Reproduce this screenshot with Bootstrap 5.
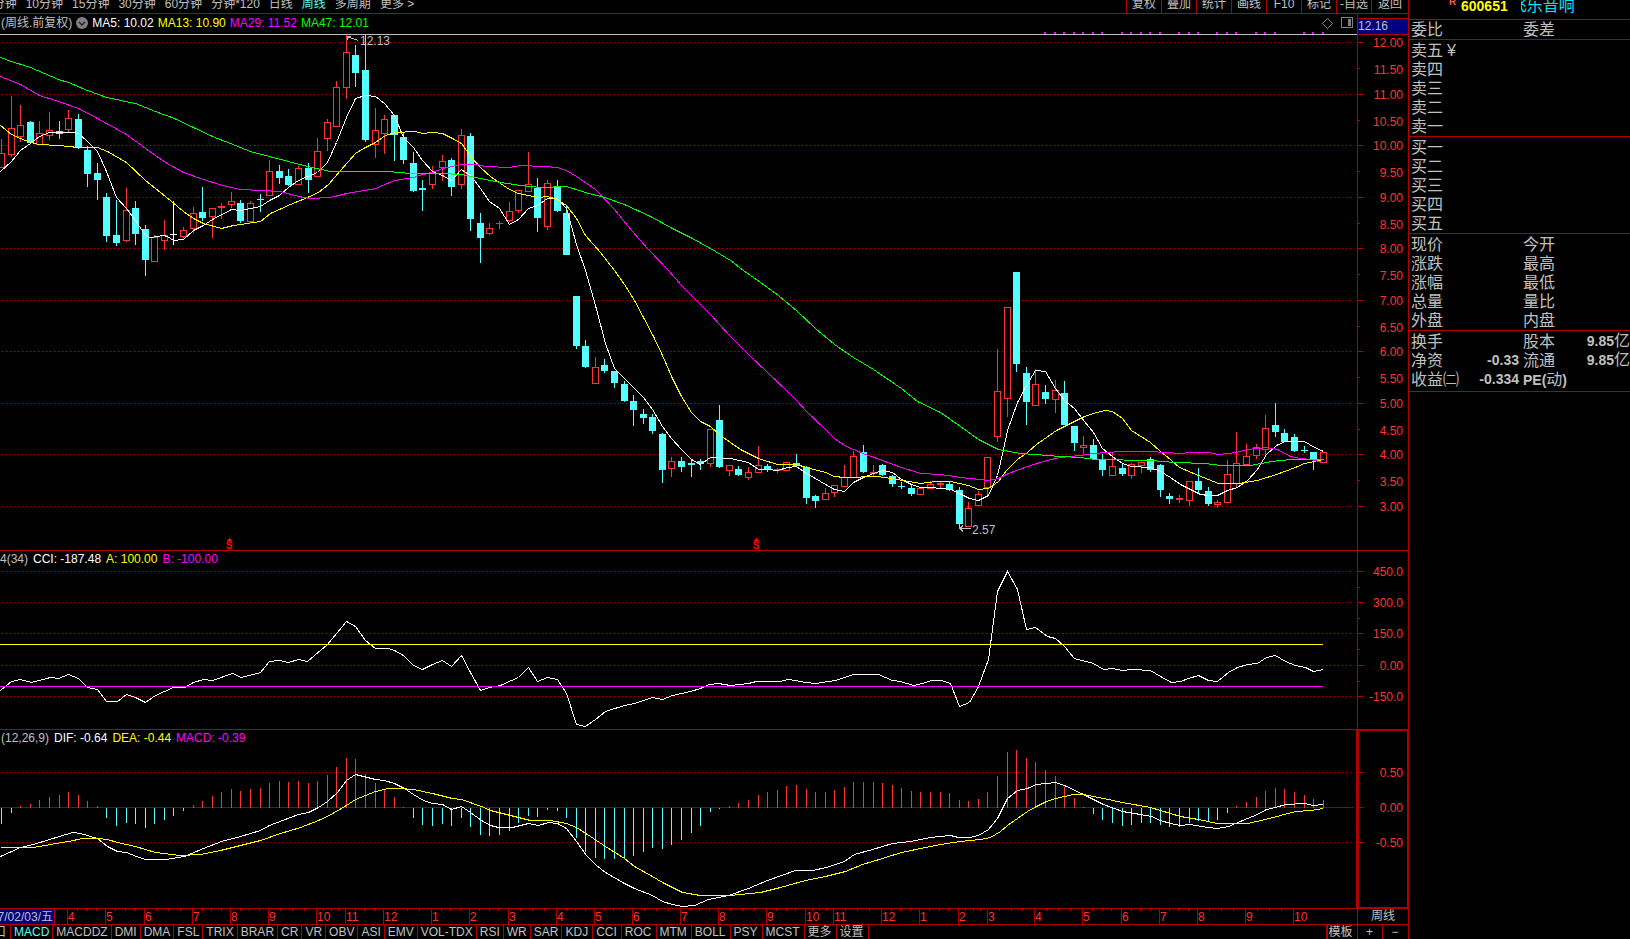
<!DOCTYPE html>
<html lang="zh-CN">
<head>
<meta charset="utf-8">
<meta name="viewport" content="width=device-width, initial-scale=1">
<title>600651 周线</title>
<link href="https://cdn.jsdelivr.net/npm/bootstrap@5.3.0/dist/css/bootstrap.min.css" rel="stylesheet">
<style>
:root { --line: #b00000; --red: #ff3232; --cyan: #54ffff; --grey: #c0c0c0; --yellow: #ffff00; --pink: #ff00ff; --lime: #00ff00; }
body { background: #000; color: var(--grey); font: 12px/16px "Liberation Sans", "Noto Sans CJK SC", sans-serif; overflow: hidden; }
button { background: none; border: 0; padding: 0; color: inherit; font: inherit; white-space: nowrap; }
svg { display: block; shape-rendering: crispEdges; }
svg text { font-size: 12px; }
.main-col { border-right: 1px solid var(--line); min-width: 0; }
.rule-b { border-bottom: 1px solid var(--line); }
.tool-row { height: 14px; overflow: hidden; line-height: 18px; }
.periods { gap: 9px; margin-left: -14px; }
.periods .active, .tabs .active { color: var(--cyan); }
.tools button { width: 35px; border-left: 1px solid var(--line); }
.tools button:last-child { width: 37px; }
.plot { min-width: 0; overflow-x: clip; }
.plot svg { width: 100%; overflow: visible; }
.plot .icon-svg { width: auto; flex: none; }
.scale { width: 51px; border-left: 1px solid var(--line); }
.scale text { fill: var(--red); text-anchor: end; }
.legend-row { gap: 5px; white-space: nowrap; padding-left: 1px; }
.price-head { height: 20px; padding: 0 4px 2px 0; }
.price-head .legend-row { gap: 4px; }
.price-plot { height: 516px; }
.sub-plot { height: 162px; }
.sub-scale { height: 178px; }
.price-scale { height: 515px; }
.top-price { margin-top: 4px; height: 17px; line-height: 15px; background: #000080; border: solid var(--line); border-width: 1px 0; }
.focused { box-shadow: inset 0 0 0 1px var(--line); outline: 1px solid var(--line); }
.date-row svg { height: 15px; }
.date-row { line-height: 15px; }
.tabs { height: 14px; line-height: 14px; overflow: hidden; }
.tabs button { padding: 0 3px; border-right: 1px solid var(--line); }
.tabs button:nth-child(n+18) { padding-right: 4px; }
.tabs .tab-cut { width: 11px; direction: rtl; overflow: hidden; padding: 0 4px; }
.tabs .zoom-btn { width: 25px; }
.tabs .tpl { border-left: 2px solid var(--line); width: 32px; padding: 0; }
.side-col { width: 221px; flex: none; font-size: 16px; line-height: 19px; }
.stock-head { height: 20px; line-height: 12px; padding-left: 40px; white-space: nowrap; }
.stock-code, .num { font-size: 14px; font-weight: bold; }
.stock-code { color: var(--yellow); }
.stock-name { color: #00e5ff; overflow: hidden; direction: rtl; width: 54px; height: 18px; margin-left: 13px; }
.r-mark { color: #ff5050; font-size: 10px; font-weight: bold; line-height: 4px; width: 12px; }
.quote { table-layout: fixed; width: 219px; margin-left: 2px; }
.quote th, .quote td { padding: 0; font-weight: normal; white-space: nowrap; height: 19px; line-height: 19px; }
.quote .num { font-weight: bold; text-align: right; }
.quote span { line-height: 12px; }
.quote .gap-r { padding-right: 4px; }
.quote-box { padding-top: 1px; }
.quote-last { padding-bottom: 2px; }
.up { stroke: var(--red); fill: #000; }
.down { stroke: var(--cyan); fill: var(--cyan); }
.flat { stroke: #fff; fill: #fff; }
.curve { fill: none; stroke-width: 1; }
.grid-line { stroke: var(--line); stroke-dasharray: 1 3; stroke-dashoffset: -2; }
.zero-line { stroke: var(--line); stroke-dasharray: 1 1; }
.tick { stroke: var(--line); }
.month { fill: var(--red); }
</style>
</head>
<body>
<div class="d-flex vh-100">
  <main class="main-col flex-fill d-flex flex-column">
    <nav class="tool-row rule-b d-flex justify-content-between align-items-end">
      <div class="periods d-flex">
        <button>5分钟</button><button>10分钟</button><button>15分钟</button><button>30分钟</button><button>60分钟</button><button>分钟*120</button><button>日线</button><button class="active">周线</button><button>多周期</button><button>更多 &gt;</button>
      </div>
      <div class="tools d-flex">
        <button>复权</button><button>叠加</button><button>统计</button><button>画线</button><button>F10</button><button>标记</button><button>-自选</button><button>返回</button>
      </div>
    </nav>

    <section class="d-flex rule-b">
      <div class="plot flex-fill">
        <div class="price-head d-flex justify-content-between align-items-center">
          <div class="legend-row d-flex align-items-center">
            <span>(周线.前复权)</span>
            <svg class="icon-svg" width="12" height="12" style="shape-rendering:auto"><circle cx="6" cy="6" r="6" fill="#808080"/><path d="M3 5l3 3 3-3" fill="none" stroke="#222" stroke-width="1.5"/></svg>
            <span class="text-white">MA5: 10.02</span>
            <span style="color:var(--yellow)">MA13: 10.90</span>
            <span style="color:var(--pink)">MA29: 11.52</span>
            <span style="color:var(--lime)">MA47: 12.01</span>
          </div>
          <div class="d-flex align-items-center gap-2">
            <svg class="icon-svg" width="11" height="11"><path d="M5.5 .5l5 5-5 5-5-5z" fill="none" stroke="#808080"/></svg>
            <svg class="icon-svg" width="12" height="12"><rect x=".5" y=".5" width="11" height="10" rx="1" fill="none" stroke="#808080"/><path d="M7 2h3v7H7z" fill="#808080"/></svg>
          </div>
        </div>
        <svg class="price-plot"><g id="price" transform="translate(0,-34)"></g></svg>
      </div>
      <div class="scale">
        <div class="top-price">12.16</div>
        <svg class="price-scale" width="50"><g id="priceScale" transform="translate(0,-35)"></g></svg>
      </div>
    </section>

    <section class="d-flex rule-b">
      <div class="plot flex-fill">
        <div class="legend-row d-flex ps-0">
          <span>4(34)</span><span class="text-white">CCI: -187.48</span><span style="color:var(--yellow)">A: 100.00</span><span style="color:var(--pink)">B: -100.00</span>
        </div>
        <svg class="sub-plot"><g id="cci" transform="translate(0,-567)"></g></svg>
      </div>
      <div class="scale"><svg class="sub-scale" width="50"><g id="cciScale" transform="translate(0,-551)"></g></svg></div>
    </section>

    <section class="d-flex rule-b">
      <div class="plot flex-fill">
        <div class="legend-row d-flex">
          <span>(12,26,9)</span><span class="text-white">DIF: -0.64</span><span style="color:var(--yellow)">DEA: -0.44</span><span style="color:var(--pink)">MACD: -0.39</span>
        </div>
        <svg class="sub-plot"><g id="macd" transform="translate(0,-746)"></g></svg>
      </div>
      <div class="scale focused"><svg class="sub-scale" width="50"><g id="macdScale" transform="translate(0,-730)"></g></svg></div>
    </section>

    <section class="date-row d-flex rule-b">
      <div class="plot flex-fill"><svg><g id="dates"></g></svg></div>
      <div class="scale text-center">周线</div>
    </section>

    <nav class="tabs d-flex">
      <button class="tab-cut">窗口</button><button class="active">MACD</button><button>MACDDZ</button><button>DMI</button><button>DMA</button><button>FSL</button><button>TRIX</button><button>BRAR</button><button>CR</button><button>VR</button><button>OBV</button><button>ASI</button><button>EMV</button><button>VOL-TDX</button><button>RSI</button><button>WR</button><button>SAR</button><button>KDJ</button><button>CCI</button><button>ROC</button><button>MTM</button><button>BOLL</button><button>PSY</button><button>MCST</button><button>更多</button><button>设置</button>
      <button class="tpl ms-auto">模板</button><button class="zoom-btn">+</button><button class="zoom-btn border-end-0">−</button>
    </nav>
  </main>

  <aside class="side-col">
    <div class="stock-head rule-b d-flex">
      <span class="r-mark">R</span><span class="stock-code">600651</span><span class="stock-name">飞乐音响</span>
    </div>
    <div class="rule-b"><table class="quote"><tr><th style="width:112px">委比</th><th>委差</th></tr></table></div>
    <div class="rule-b quote-box"><table class="quote">
      <tr><th>卖五<span class="ms-1">¥</span></th></tr><tr><th>卖四</th></tr><tr><th>卖三</th></tr><tr><th>卖二</th></tr><tr><th>卖一</th></tr>
    </table></div>
    <div class="rule-b quote-box"><table class="quote">
      <tr><th>买一</th></tr><tr><th>买二</th></tr><tr><th>买三</th></tr><tr><th>买四</th></tr><tr><th>买五</th></tr>
    </table></div>
    <div class="rule-b quote-box"><table class="quote">
      <tr><th style="width:112px">现价</th><th>今开</th></tr><tr><th>涨跌</th><th>最高</th></tr><tr><th>涨幅</th><th>最低</th></tr><tr><th>总量</th><th>量比</th></tr><tr><th>外盘</th><th>内盘</th></tr>
    </table></div>
    <div class="rule-b quote-box quote-last"><table class="quote">
      <tr><th style="width:48px">换手</th><td style="width:64px"></td><th style="width:48px">股本</th><td class="num">9.85<span class="fs-6 fw-normal">亿</span></td></tr>
      <tr><th>净资</th><td class="num gap-r">-0.33</td><th>流通</th><td class="num">9.85<span class="fs-6 fw-normal">亿</span></td></tr>
      <tr><th>收益㈡</th><td class="num gap-r">-0.334</td><th><span class="num">PE(</span>动<span class="num">)</span></th><td></td></tr>
    </table></div>
  </aside>
</div>

<script src="https://cdn.jsdelivr.net/npm/bootstrap@5.3.0/dist/js/bootstrap.bundle.min.js"></script>
<script>
const $ = id => document.getElementById(id);
const X = i => Math.floor(1.55 + 9.577 * i);
const curve = (pts, color) => `<polyline class="curve" transform="translate(.5,.5)" stroke="${color}" points="${pts}"/>`;
const gridLine = (y, cls = 'grid-line') => `<line class="${cls}" x1="0" x2="99.8%" y1="${y}.5" y2="${y}.5"/>`;

// weekly candles: high, body top, body bottom, low, kind (r up, c down, w flat)
const candles = `139,153,167,167,r 96,128,154,156,r 105,125,136,141,r 121,122,142,143,c 121,133,144,144,r 112,130,135,139,r 121,131,133,138,c 110,118,129,131,r 114,119,147,148,c 146,150,173,186,c 163,173,179,199,c 193,197,235,241,c 200,235,242,245,c 188,210,240,241,r 201,208,233,244,c 225,229,259,275,c 235,237,261,261,r 220,235,240,249,r 201,234,234,244,w 227,230,236,237,r 207,213,228,232,r 187,212,217,220,c 208,208,216,237,r 203,206,207,218,r 192,201,204,207,r 200,203,220,222,c 201,203,221,221,r 194,199,199,211,c 160,171,195,195,r 165,171,177,183,c 169,176,184,185,c 166,168,184,184,r 163,168,179,192,c 138,151,176,176,r 119,122,138,150,r 81,87,126,126,r 35,52,87,98,r 45,55,72,86,c 35,70,139,141,c 108,130,144,157,r 115,119,133,153,r 115,115,134,160,c 132,137,159,163,c 152,163,190,191,c 180,188,189,210,c 166,172,184,188,r 155,161,167,180,r 158,160,186,195,c 129,135,184,188,r 133,136,218,230,c 213,223,237,262,c 223,228,233,234,r 221,223,223,228,r 202,211,220,221,r 190,190,210,212,r 152,184,191,191,r 178,188,217,231,c 180,183,226,229,r 180,186,210,211,c 205,213,254,254,c 296,296,345,348,c 340,346,366,367,c 357,367,383,383,r 359,365,370,372,c 371,371,382,387,c 381,384,400,401,c 395,401,409,425,c 409,414,417,423,c 414,417,430,433,c 433,434,469,482,c 457,461,468,476,r 457,461,466,471,c 459,463,464,476,c 459,461,463,469,c 429,429,463,466,r 405,420,466,467,c 465,465,470,475,r 466,469,474,475,c 467,472,477,479,r 446,465,472,472,r 464,466,468,471,c 468,469,470,472,r 462,462,470,470,r 454,463,465,465,c 466,467,497,503,c 495,496,500,507,c 488,493,499,499,r 485,485,492,496,r 465,477,486,486,r 451,456,477,477,r 445,452,471,472,c 465,472,473,475,r 464,465,474,475,c 475,476,483,486,c 482,486,486,488,c 485,488,493,495,c 488,488,494,494,r 481,484,488,488,r 481,483,484,487,r 482,484,489,490,c 487,490,523,528,c 502,508,526,526,r 491,494,505,505,r 457,457,487,494,r 349,391,436,441,r 307,307,398,416,r 272,272,363,371,c 367,373,401,424,c 369,384,405,405,r 385,392,398,403,c 380,390,399,412,r 381,393,424,424,c 426,426,442,450,c 436,445,447,453,r 439,445,458,459,c 454,459,469,475,c 452,466,475,475,r 464,468,473,475,c 463,464,475,478,r 462,462,465,472,r 457,459,469,471,c 464,465,489,496,c 493,496,498,503,c 495,498,499,502,r 481,481,500,505,r 468,481,489,492,c 487,491,503,505,c 500,502,504,507,r 460,474,502,502,r 432,463,483,486,r 444,456,464,465,r 444,447,455,458,r 415,428,449,454,r 403,425,431,436,c 429,433,441,441,c 434,437,450,451,c 446,450,450,452,c 452,452,458,469,c 452,452,462,462,r`.split(' ').map(s => s.split(','));

const ma5 = '0,171 11,161 20,150 30,143 39,136 49,132 73,132 78,133 87,141 97,151 106,171 116,197 126,208 135,220 145,235 150,237 163,235 167,236 173,240 183,239 193,230 203,225 212,219 231,209 240,210 250,208 260,206 269,200 279,195 288,187 298,180 307,176 317,172 327,162 336,142 346,117 355,98 365,95 375,96 384,103 394,115 403,137 413,147 422,160 432,171 442,175 451,180 461,169 471,176 480,188 489,201 499,208 509,224 518,219 528,208 537,205 547,198 557,198 566,208 576,244 585,270 595,305 605,343 614,368 624,378 634,388 643,397 652,409 662,426 671,438 681,449 691,459 700,464 710,457 730,458 748,462 758,469 768,469 777,470 787,467 796,466 806,473 815,478 825,484 834,489 844,491 853,482 863,477 873,473 882,470 892,472 901,479 911,484 920,487 930,487 950,489 959,493 969,498 978,500 988,495 997,475 1003,449 1007,430 1017,402 1026,385 1035,370 1045,371 1055,388 1064,400 1074,408 1084,421 1093,432 1102,448 1112,456 1122,463 1131,466 1150,467 1160,471 1170,477 1180,484 1190,489 1200,494 1208,495 1217,495 1227,490 1237,487 1247,480 1257,469 1266,454 1276,445 1285,441 1304,441 1314,447 1323,451';
const ma13 = '0,125 11,134 20,138 30,142 39,144 58,145 78,147 97,147 107,151 126,162 145,180 165,196 183,211 193,218 203,223 221,228 233,225 260,221 270,213 290,204 307,197 318,192 328,184 340,170 355,153 365,147 375,142 385,135 395,132 415,131 422,133 432,132 442,133 452,138 461,143 471,157 481,168 490,176 500,183 509,189 518,193 528,195 538,197 547,196 557,199 566,205 576,218 585,235 600,252 614,270 624,284 634,300 643,317 653,336 662,355 672,378 681,396 691,412 700,421 710,426 720,435 740,449 758,458 777,464 796,464 806,467 825,472 834,476 844,477 877,476 897,479 920,483 935,481 950,481 968,485 978,489 988,488 998,481 1006,470 1017,459 1027,452 1036,444 1056,430 1074,421 1084,416 1093,413 1104,410 1112,411 1122,418 1131,430 1150,442 1160,451 1170,459 1179,467 1198,475 1218,483 1238,483 1257,480 1276,474 1295,467 1304,463 1323,459';
const ma29 = '0,76 20,84 39,95 58,101 78,108 97,118 106,123 126,134 145,148 165,162 183,172 203,179 222,185 240,189 280,191 298,196 310,198 330,197 346,193 375,188 394,180 413,177 422,174 432,172 442,168 461,164 476,164 485,166 509,167 520,165 543,166 557,167 566,170 576,176 595,189 614,209 632,231 648,249 668,270 681,285 692,296 710,314 729,335 748,354 768,373 787,391 796,400 806,411 825,429 834,438 844,445 853,449 865,454 882,460 901,467 920,473 940,474 960,477 988,480 998,478 1008,473 1027,466 1046,460 1060,457 1080,455 1093,453 1120,451 1150,451 1180,453 1190,452 1208,452 1218,454 1236,452 1247,449 1266,447 1277,449 1290,456 1300,458 1310,459 1323,462';
const ma47 = '0,57 11,61 30,67 58,79 68,82 87,90 106,97 135,103 155,111 174,118 193,127 212,136 230,143 250,151 269,156 288,161 307,166 330,171 388,171 410,173 440,173 461,174 480,178 500,182 520,185 540,187 566,186 585,192 604,197 624,204 650,216 672,228 690,237 710,248 730,260 743,270 760,282 778,295 797,311 815,328 834,344 853,357 873,369 901,388 917,401 940,412 960,426 978,439 998,449 1020,453 1035,454 1060,456 1080,457 1095,459 1150,460 1175,462 1205,463 1220,465 1250,465 1271,461 1290,459 1323,459';

const priceGrid = [42, 94, 145, 197, 248, 300, 351, 403, 454, 506];
let s = `<line x1="0" x2="100%" y1="34.5" y2="34.5" stroke="#c0c0c0"/>` + priceGrid.map(y => gridLine(y)).join('');
candles.forEach(([h, t, b, l, k], i) => {
  h = +h; t = +t; b = +b; l = +l;
  const x = X(i), cls = { r: 'up', c: 'down', w: 'flat' }[k];
  s += `<line class="${cls}" x1="${x}.5" x2="${x}.5" y1="${h}" y2="${l + 1}"/>`;
  s += t === b ? `<line class="${cls}" x1="${x - 3}" x2="${x + 4}" y1="${t}.5" y2="${t}.5"/>`
               : `<rect class="${cls}" x="${x - 2.5}" y="${t + .5}" width="6" height="${b - t}"/>`;
});
s += curve(ma5, '#fff') + curve(ma13, '#ff0') + curve(ma29, '#f0f') + curve(ma47, '#0f0');
// signal dots along the top edge
[[109, 115], [117, 121], [123, 125], [127, 129], [131, 133], [136, 138]].forEach(([a, b]) => {
  for (let i = a; i <= b; i++) s += `<rect x="${X(i) - 1}" y="32" width="2" height="2" fill="#f0f"/>`;
});
s += `<path d="M358 40.500L347 36.500M347 39.500V36.500H351" stroke="#c0c0c0" fill="none"/><text x="360" y="45" fill="#c0c0c0">12.13</text>
<path d="M971 528.500H960M963 525.500L960 528.500L963 531.500" stroke="#c0c0c0" fill="none"/><text x="972" y="534" fill="#c0c0c0">2.57</text>`;
[229, 756].forEach(x => s += `<path d="M${x - 3} 541L${x} 538L${x + 3} 541z" fill="red"/><text x="${x}" y="549" text-anchor="middle" font-weight="bold" style="font-size:10px" fill="red">S</text>`);
$('price').innerHTML = s;

const tick = (y, w) => `<line class="tick" x1="0" x2="${w}" y1="${y}.5" y2="${y}.5"/>`;
const label = (y, t) => `<text x="45" y="${y + 5}">${t}</text>`;
s = '';
priceGrid.forEach((y, i) => {
  s += tick(y, 5) + label(y, (12 - i).toFixed(2));
  if (i < 9) s += tick(y + 26, 2) + label(y + 27, (11.5 - i).toFixed(2));
});
$('priceScale').innerHTML = s;

const cci = '0,690 11,681 20,679 31,682 50,677 58,678 68,674 78,678 87,687 97,689 106,701 117,701 126,694 135,697 145,702 155,695 173,687 184,687 193,682 203,679 212,680 232,673 241,677 260,672 269,661 279,660 288,662 298,659 307,661 327,644 346,621 355,626 365,640 375,648 388,648 394,650 403,655 413,665 422,669 432,664 442,660 451,666 461,655 470,672 480,690 489,687 500,685 511,680 518,677 528,667 537,681 547,677 557,679 566,693 576,724 585,726 595,719 605,711 624,705 634,703 652,697 662,699 672,695 690,691 700,688 709,684 718,683 730,685 748,683 756,681 780,681 787,679 795,680 805,682 815,683 835,680 853,674 878,674 892,680 900,681 913,685 922,683 931,680 941,680 950,683 959,706 969,702 978,686 988,659 997,591 1007,571 1017,589 1026,629 1035,627 1047,636 1055,638 1064,646 1074,658 1093,663 1103,669 1112,668 1122,670 1132,669 1150,670 1160,676 1171,682 1180,681 1188,678 1198,675 1208,680 1217,681 1228,672 1237,667 1247,664 1257,663 1266,657 1275,655 1285,661 1295,665 1305,667 1313,671 1323,669';
const cciGrid = [571, 602, 633, 665, 696];
$('cci').innerHTML = cciGrid.map(y => gridLine(y)).join('') + curve(cci, '#fff') + curve('-1,644 1322,644', '#ff0') + curve('-1,686 1322,686', '#f0f');
$('cciScale').innerHTML = cciGrid.map((y, i) => tick(y, 5) + (i < 4 ? tick(y + 16, 2) : '') + label(y, ['450.0', '300.0', '150.0', '0.00', '-150.0'][i])).join('');

const hist = [824,813,806,804,800,797,795,792,795,801,806,818,826,823,824,828,824,820,816,811,805,801,796,792,789,791,789,788,783,781,782,781,783,781,775,767,758,759,774,783,789,797,807,818,825,826,824,826,818,827,835,836,835,831,823,816,817,810,811,818,838,852,858,859,859,858,856,852,848,849,845,840,833,826,812,809,806,803,800,795,792,790,786,785,789,792,792,790,787,782,782,782,783,785,788,791,792,792,792,793,800,801,799,792,776,752,750,758,762,770,776,787,798,807,814,820,823,826,825,823,823,825,827,827,823,821,821,820,813,806,802,797,791,788,789,792,795,799,800];
const dif = '0,856 20,847 33,844 49,839 59,836 72,832 80,833 97,838 107,846 117,851 126,852 136,856 145,859 165,859 184,856 203,848 221,841 240,836 260,830 269,825 290,817 298,814 308,812 318,807 327,801 337,792 346,780 355,774 375,779 384,780 394,783 404,788 413,794 423,800 432,803 442,804 451,809 461,806 470,812 481,820 490,825 498,827 512,827 528,823 538,825 548,822 557,823 566,828 576,841 586,855 596,865 605,872 624,883 634,888 652,895 662,901 672,904 682,906 694,905 708,899 728,895 748,888 767,880 795,870 812,870 826,867 844,861 854,854 872,849 892,843 910,841 930,837 950,835 958,837 969,837 978,835 988,829 997,818 1002,808 1007,798 1017,790 1027,788 1036,784 1055,782 1064,785 1083,794 1103,804 1122,811 1140,814 1151,816 1160,820 1170,823 1180,825 1190,824 1207,827 1217,828 1228,826 1247,818 1257,814 1266,809 1275,807 1285,804 1304,803 1313,805 1323,804';
const dea = '0,847 33,847 50,844 68,841 82,838 97,838 107,839 117,842 135,846 155,852 180,855 200,854 220,850 240,845 260,840 280,833 300,827 318,820 327,816 346,805 355,799 375,791 388,788 400,788 413,789 432,793 452,798 461,799 481,806 490,810 510,815 530,820 550,820 566,823 576,827 590,836 605,846 624,858 634,866 652,876 662,882 682,892 700,895 730,895 760,892 780,887 805,880 825,876 845,871 862,864 882,858 901,852 925,847 940,844 960,841 980,839 990,837 1000,831 1007,825 1017,818 1027,811 1036,806 1046,801 1055,798 1073,794 1083,794 1103,798 1122,802 1150,807 1170,813 1180,816 1198,819 1217,823 1247,823 1265,819 1280,815 1295,811 1310,810 1323,808';
s = gridLine(772) + gridLine(807, 'zero-line') + gridLine(842);
hist.forEach((y, i) => s += `<line class="${y > 807 ? 'down' : 'up'}" x1="${X(i)}.5" x2="${X(i)}.5" y1="808" y2="${y}"/>`);
$('macd').innerHTML = s + curve(dif, '#fff') + curve(dea, '#ff0');
$('macdScale').innerHTML = [772, 807, 842].map((y, i) => tick(y, 5) + (i < 2 ? tick(y + 18, 2) : '') + label(y, ['0.50', '0.00', '-0.50'][i])).join('');

// month boundaries with quarter ticks between them
const months = [[67,4],[105,5],[144,6],[192,7],[230,8],[268,9],[316,10],[345,11],[383,12],[431,1],[469,2],[508,3],[556,4],[594,5],[632,6],[680,7],[718,8],[766,9],[805,10],[833,11],[881,12],[919,1],[958,2],[987,3],[1034,4],[1082,5],[1121,6],[1159,7],[1197,8],[1245,9],[1293,10]];
s = `<rect width="54" height="15" fill="#000080"/><text x="53" y="12" text-anchor="end" fill="#c0c0c0">2017/02/03/五</text><line class="tick" x1="54.5" x2="54.5" y1="0" y2="15"/>`;
months.forEach(([x, m], i) => {
  s += `<line class="tick" x1="${x}.5" x2="${x}.5" y1="0" y2="15"/><text class="month" x="${x + 1}" y="12">${m}</text>`;
  const next = months[i + 1];
  if (next) for (let q = 1; q < 4; q++) { const t = Math.round(x + (next[0] - x) * q / 4); s += `<line class="tick" x1="${t}.5" x2="${t}.5" y1="0" y2="2"/>`; }
});
$('dates').innerHTML = s;
</script>
</body>
</html>
